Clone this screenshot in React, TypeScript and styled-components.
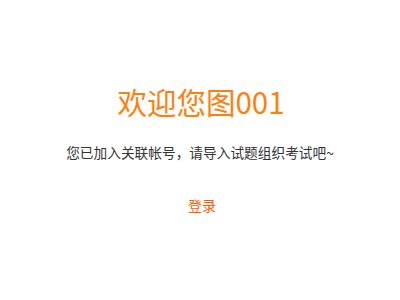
import styled, { createGlobalStyle } from 'styled-components';

const GlobalStyle = createGlobalStyle`
  html, body {
    margin: 0;
    padding: 0;
    background: #fff;
  }
  body {
    font-family: "Noto Sans CJK SC", "Microsoft YaHei", "Liberation Sans", sans-serif;
  }
`;

const StyledPage = styled.div`
  display: flex;
  flex-direction: column;
  align-items: center;
  width: 400px;
  height: 300px;
  padding-top: 80px;
  box-sizing: border-box;
`;

const StyledTitle = styled.h1`
  margin: 0 0 0 2px;
  font-size: 29.5px;
  font-weight: 400;
  line-height: 42px;
  color: #ff7f0e;
`;

const StyledTip = styled.p`
  margin: 19px 0 0;
  font-size: 13.7px;
  line-height: 22px;
  color: #333;
`;

const StyledLink = styled.a`
  margin: 31px 0 0 4px;
  font-size: 14px;
  line-height: 22px;
  color: #ff5c00;
  text-decoration: none;
  cursor: pointer;
`;

const App = () => {
  return (
    <>
      <GlobalStyle />
      <StyledPage>
        <StyledTitle>欢迎您图001</StyledTitle>
        <StyledTip>您已加入关联帐号，请导入试题组织考试吧~</StyledTip>
        <StyledLink>登录</StyledLink>
      </StyledPage>
    </>
  );
};

export default App;
